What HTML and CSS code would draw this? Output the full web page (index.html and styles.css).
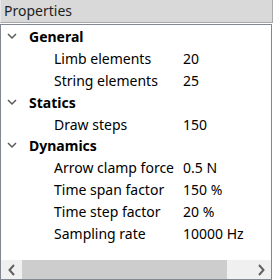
FILE: index.html
```html
<!DOCTYPE html>
<html>
<head>
<meta charset="utf-8">
<link rel="stylesheet" href="styles.css">
</head>
<body>
<div class="panel">
  <div class="title">Properties</div>
  <div class="tree">
    <div class="rows">
      <div class="group"><span class="chev"><svg width="10" height="7" viewBox="0 0 10 7"><path d="M1 1 L5 5 L9 1" fill="none" stroke="#5a5a5a" stroke-width="1.5"/></svg></span><span class="gname">General</span></div>
      <div class="row"><span class="label">Limb elements</span><span class="value">20</span></div>
      <div class="row"><span class="label">String elements</span><span class="value">25</span></div>
      <div class="group"><span class="chev"><svg width="10" height="7" viewBox="0 0 10 7"><path d="M1 1 L5 5 L9 1" fill="none" stroke="#5a5a5a" stroke-width="1.5"/></svg></span><span class="gname">Statics</span></div>
      <div class="row"><span class="label">Draw steps</span><span class="value">150</span></div>
      <div class="group"><span class="chev"><svg width="10" height="7" viewBox="0 0 10 7"><path d="M1 1 L5 5 L9 1" fill="none" stroke="#5a5a5a" stroke-width="1.5"/></svg></span><span class="gname">Dynamics</span></div>
      <div class="row"><span class="label">Arrow clamp force</span><span class="value">0.5 N</span></div>
      <div class="row"><span class="label">Time span factor</span><span class="value">150 %</span></div>
      <div class="row"><span class="label">Time step factor</span><span class="value">20 %</span></div>
      <div class="row"><span class="label">Sampling rate</span><span class="value">10000 Hz</span></div>
    </div>
    <div class="hscroll">
      <div class="arrow"><svg width="8" height="12" viewBox="0 0 8 12"><path d="M6 1 L1.5 6 L6 11" fill="none" stroke="#606060" stroke-width="2"/></svg></div>
      <div class="track"><div class="thumb"></div></div>
      <div class="arrow"><svg width="8" height="12" viewBox="0 0 8 12"><path d="M2 1 L6.5 6 L2 11" fill="none" stroke="#606060" stroke-width="2"/></svg></div>
    </div>
  </div>
</div>
</body>
</html>
```
FILE: styles.css
```css
html, body {
  margin: 0;
  padding: 0;
  background: #ffffff;
}
body {
  font-family: "Noto Sans", "Open Sans", sans-serif;
  font-size: 14px;
  color: #000;
}
.panel {
  width: 273px;
  height: 280px;
  display: flex;
  flex-direction: column;
}
.title {
  box-sizing: border-box;
  background: #d9d9d9;
  border: 1px solid #a9a9a9;
  border-left-color: #e8e8e8;
  border-top: none;
  padding-left: 3px;
  line-height: 21px;
  font-size: 14px;
  color: #1e1e1e;
  width: 273px;
  height: 23px;
}
.tree {
  flex: 1;
  margin-top: 1px;
  border: 1px solid #828790;
  display: flex;
  flex-direction: column;
  width: 272px;
  box-sizing: border-box;
}
.rows {
  flex: 1;
  padding-top: 1px;
}
.group, .row {
  height: 21.8px;
  display: flex;
  align-items: center;
  white-space: nowrap;
}
.chev {
  width: 28px;
  padding-left: 6px;
  box-sizing: border-box;
  display: flex;
  align-items: center;
}
.gname {
  font-weight: bold;
}
.label {
  padding-left: 53px;
  width: 182px;
  box-sizing: border-box;
}
.hscroll {
  height: 19px;
  background: #f0f0f0;
  display: flex;
  align-items: stretch;
}
.arrow {
  width: 21px;
  display: flex;
  align-items: center;
  justify-content: center;
}
.track {
  flex: 1;
  display: flex;
}
.thumb {
  width: 205px;
  background: #cdcdcd;
}
```
